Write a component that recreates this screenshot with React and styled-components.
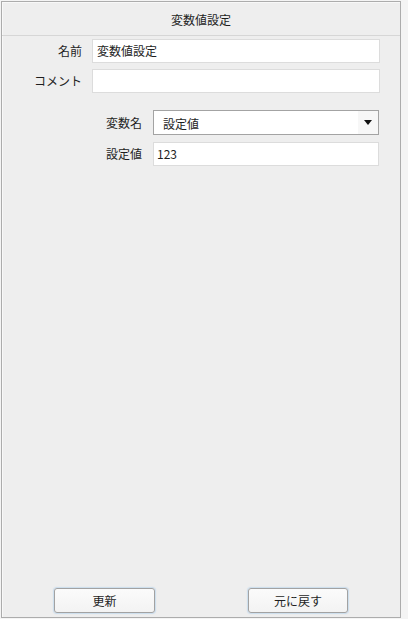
import React from 'react';
import styled, { createGlobalStyle } from 'styled-components';

const GlobalStyle = createGlobalStyle`
  html, body {
    margin: 0;
    padding: 0;
    background: #f4f4f4;
  }
  body {
    font-family: "Noto Sans CJK JP", "Noto Sans", sans-serif;
    font-size: 12px;
    color: #1e1e1e;
  }
`;

const Panel = styled.div`
  box-sizing: border-box;
  margin: 1px 0 0 1px;
  width: 400px;
  height: 617px;
  border: 1px solid #acacac;
  box-shadow: inset 1px 1px 0 #f8f8f8;
  background: #eeeeee;
  display: flex;
  flex-direction: column;
`;

const Header = styled.div`
  box-sizing: border-box;
  height: 34px;
  border-bottom: 1px solid #d6d6d6;
  display: flex;
  align-items: center;
  justify-content: center;
  padding-top: 1px;
`;

const Section = styled.div`
  display: grid;
  grid-template-columns: ${(p) => p.labelWidth}px ${(p) => p.fieldWidth}px;
  column-gap: ${(p) => p.gap}px;
  row-gap: ${(p) => p.rowGap}px;
  align-items: center;
  margin-top: ${(p) => p.top}px;
`;

const Label = styled.label`
  text-align: right;
  white-space: nowrap;
  line-height: 1;
`;

const TextBox = styled.input`
  box-sizing: border-box;
  height: ${(p) => p.h || 24}px;
  width: 100%;
  margin: 0;
  border: 1px solid #dcdcdc;
  background: #ffffff;
  padding: 0 0 1px ${(p) => p.pad || 4}px;
  font: inherit;
  color: #1e1e1e;
  outline: none;
`;

const Dropdown = styled.div`
  box-sizing: border-box;
  height: 25px;
  border: 1px solid #a3a3a3;
  background: #ffffff;
  display: flex;
  align-items: stretch;
`;

const DropdownText = styled.span`
  flex: 1;
  display: flex;
  align-items: center;
  padding-left: 9px;
  padding-top: 1px;
`;

const DropdownArrow = styled.span`
  width: 20px;
  background: #f7f7f7;
  display: flex;
  align-items: center;
  justify-content: center;
`;

const Spacer = styled.div`
  flex: 1;
`;

const Footer = styled.div`
  display: flex;
  justify-content: space-between;
  padding: 0 52px 4px 52px;
`;

const Button = styled.button`
  box-sizing: border-box;
  width: ${(p) => p.w}px;
  height: 25px;
  margin: 0;
  border: 1px solid #a2a2a2;
  border-radius: 3px;
  background: linear-gradient(#fbfbfb, #f3f3f3);
  box-shadow: 0 0 1px 1px rgba(160, 200, 235, 0.45);
  font: inherit;
  color: #1e1e1e;
  padding: 0 0 1px;
`;

export default function App() {
  return (
    <>
      <GlobalStyle />
      <Panel>
        <Header>変数値設定</Header>

        <Section labelWidth={80} fieldWidth={288} gap={10} rowGap={6} top={3}>
          <Label>名前</Label>
          <TextBox defaultValue="変数値設定" />
          <Label>コメント</Label>
          <TextBox defaultValue="" />
        </Section>

        <Section labelWidth={140} fieldWidth={226} gap={11} rowGap={7} top={17}>
          <Label>変数名</Label>
          <Dropdown>
            <DropdownText>設定値</DropdownText>
            <DropdownArrow>
              <svg width="8" height="5" viewBox="0 0 8 5">
                <path d="M0 0 H8 L4 5 Z" fill="#111" />
              </svg>
            </DropdownArrow>
          </Dropdown>
          <Label>設定値</Label>
          <TextBox defaultValue="123" pad={3} />
        </Section>

        <Spacer />

        <Footer>
          <Button w={101}>更新</Button>
          <Button w={100}>元に戻す</Button>
        </Footer>
      </Panel>
    </>
  );
}
